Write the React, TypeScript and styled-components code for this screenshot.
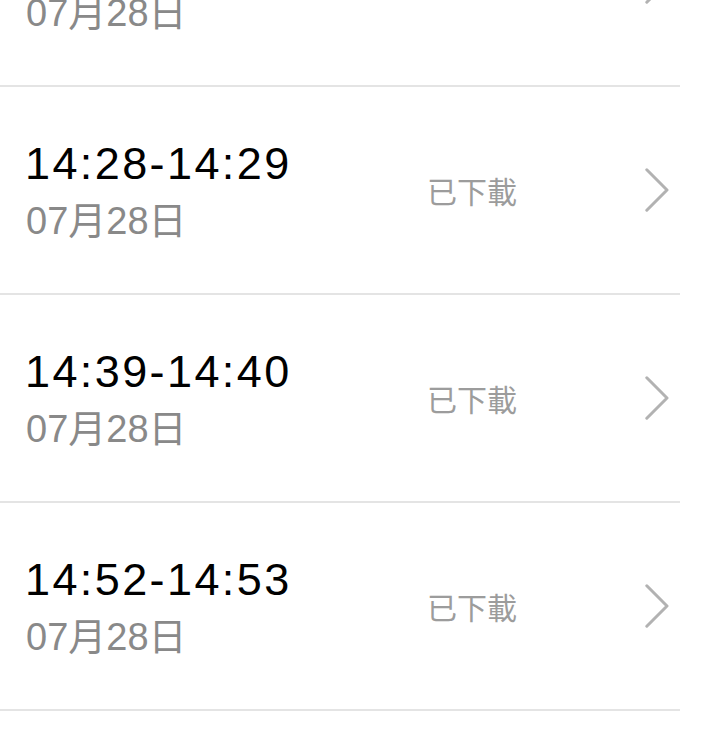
import React from "react";
import styled, { createGlobalStyle } from "styled-components";

const GlobalStyle = createGlobalStyle`
  html, body {
    margin: 0;
    padding: 0;
    background: #ffffff;
    overflow: hidden;
  }
  body {
    font-family: "Liberation Sans", "Noto Sans CJK TC", "Noto Sans CJK SC", sans-serif;
  }
`;

const Screen = styled.div`
  width: 720px;
  height: 742px;
  overflow: hidden;
  background: #ffffff;
`;

const List = styled.ul`
  list-style: none;
  margin: -121px 40px 0 0;
  padding: 0;
`;

const Row = styled.li`
  height: 206px;
  border-bottom: 2px solid #e4e4e4;
  display: flex;
  align-items: center;
  padding: 0 11px 0 25px;
`;

const Info = styled.div`
  flex: 1;
  display: flex;
  flex-direction: column;
  gap: 12px;
`;

const Time = styled.div`
  font-family: "Liberation Sans", "Noto Sans CJK TC", sans-serif;
  font-size: 45px;
  line-height: 50px;
  letter-spacing: 2.4px;
  color: #000000;
`;

const DateText = styled.div`
  font-family: "Liberation Sans", "Noto Sans CJK TC", sans-serif;
  font-size: 38px;
  line-height: 40px;
  color: #898989;
  padding-left: 1px;
`;

const Status = styled.span`
  font-family: "Noto Sans CJK TC", "Noto Sans CJK SC", sans-serif;
  font-size: 30px;
  line-height: 32px;
  color: #9c9c9c;
  margin-right: 128px;
`;

const Chevron = styled.svg`
  width: 24px;
  height: 44px;
  flex: none;
`;

type Item = { time: string; date: string; status: string };

const items: Item[] = [
  { time: "14:15-14:16", date: "07月28日", status: "已下載" },
  { time: "14:28-14:29", date: "07月28日", status: "已下載" },
  { time: "14:39-14:40", date: "07月28日", status: "已下載" },
  { time: "14:52-14:53", date: "07月28日", status: "已下載" },
];

export default function App() {
  return (
    <Screen>
      <GlobalStyle />
      <List>
        {items.map((it, i) => (
          <Row key={i}>
            <Info>
              <Time>{it.time}</Time>
              <DateText>{it.date}</DateText>
            </Info>
            <Status>{it.status}</Status>
            <Chevron viewBox="0 0 24 44" aria-hidden="true">
              <polyline
                points="1.8,1.8 22,22 1.8,42.2"
                fill="none"
                stroke="#b2b2b2"
                strokeWidth="3"
                strokeLinecap="round"
                strokeLinejoin="round"
              />
            </Chevron>
          </Row>
        ))}
      </List>
    </Screen>
  );
}
